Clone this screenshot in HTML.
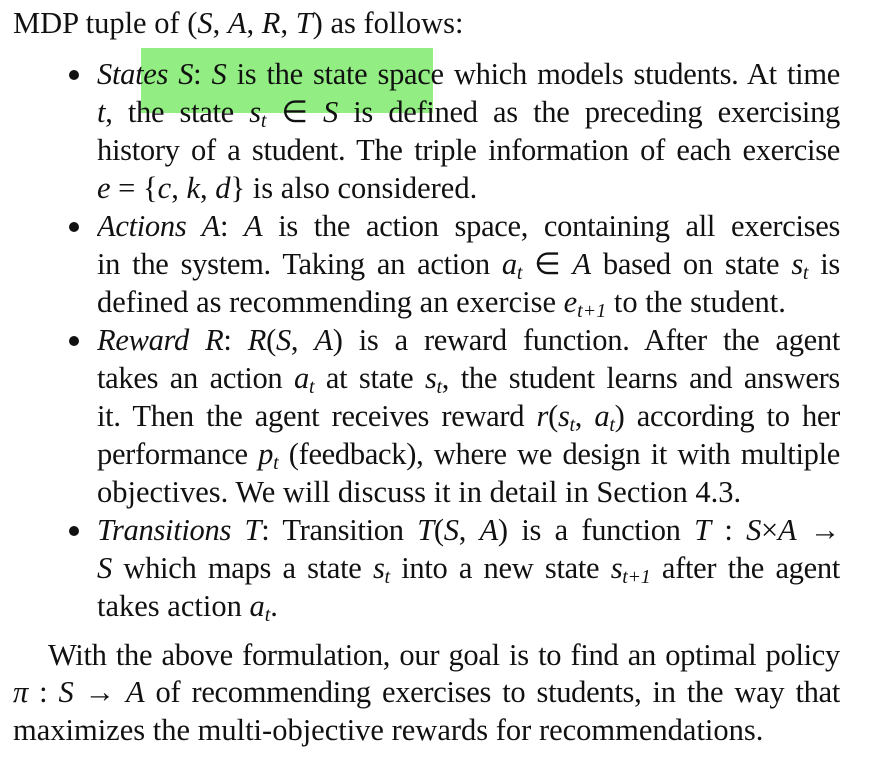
<!DOCTYPE html>
<html><head><meta charset="utf-8"><style>
html,body{margin:0;padding:0;background:#fff;}
body{width:887px;height:766px;position:relative;overflow:hidden;font-family:"Liberation Serif",serif;font-size:30.5px;color:#111;}
.l{position:absolute;line-height:38px;height:38px;white-space:nowrap;}
.j{text-align:justify;text-align-last:justify;white-space:normal;overflow:hidden;letter-spacing:-0.3px;}
.b{left:97px;width:743px;}
.p{left:13px;width:827px;}
i{font-style:italic;}
sub{font-size:20px;font-style:italic;vertical-align:-5px;line-height:0;}
.dot{position:absolute;left:69px;width:10px;height:10px;border-radius:50%;background:#111;}
.hl{position:absolute;left:141px;top:48px;width:292px;height:65px;background:#92ee82;}
</style></head><body>
<div class="hl"></div>
<div class="l" style="left:13px;top:4px">MDP tuple of (<i>S</i>, <i>A</i>, <i>R</i>, <i>T</i>) as follows:</div>

<div class="dot" style="top:70px"></div>
<div class="l j b" style="top:55px"><i>States S</i>: <i>S</i> is the state space which models students. At time</div>
<div class="l j b" style="top:93px"><i>t</i>, the state <i>s</i><sub>t</sub> ∈ <i>S</i> is defined as the preceding exercising</div>
<div class="l j b" style="top:131px">history of a student. The triple information of each exercise</div>
<div class="l b" style="top:169px"><i>e</i> = {<i>c</i>, <i>k</i>, <i>d</i>} is also considered.</div>

<div class="dot" style="top:222px"></div>
<div class="l j b" style="top:207px"><i>Actions A</i>: <i>A</i> is the action space, containing all exercises</div>
<div class="l j b" style="top:245px">in the system. Taking an action <i>a</i><sub>t</sub> ∈ <i>A</i> based on state <i>s</i><sub>t</sub> is</div>
<div class="l b" style="top:283px">defined as recommending an exercise <i>e</i><sub>t+1</sub> to the student.</div>

<div class="dot" style="top:336px"></div>
<div class="l j b" style="top:321px"><i>Reward R</i>: <i>R</i>(<i>S</i>, <i>A</i>) is a reward function. After the agent</div>
<div class="l j b" style="top:359px">takes an action <i>a</i><sub>t</sub> at state <i>s</i><sub>t</sub>, the student learns and answers</div>
<div class="l j b" style="top:397px">it. Then the agent receives reward <i>r</i>(<i>s</i><sub>t</sub>, <i>a</i><sub>t</sub>) according to her</div>
<div class="l j b" style="top:435px">performance <i>p</i><sub>t</sub> (feedback), where we design it with multiple</div>
<div class="l b" style="top:473px">objectives. We will discuss it in detail in Section 4.3.</div>

<div class="dot" style="top:526px"></div>
<div class="l j b" style="top:511px"><i>Transitions T</i>: Transition <i>T</i>(<i>S</i>, <i>A</i>) is a function <i>T</i> : <i>S</i>×<i>A</i> →</div>
<div class="l j b" style="top:549px"><i>S</i> which maps a state <i>s</i><sub>t</sub> into a new state <i>s</i><sub>t+1</sub> after the agent</div>
<div class="l b" style="top:587px">takes action <i>a</i><sub>t</sub>.</div>

<div class="l j" style="left:48px;width:792px;top:636px">With the above formulation, our goal is to find an optimal policy</div>
<div class="l j p" style="top:673px"><i>π</i> : <i>S</i> → <i>A</i> of recommending exercises to students, in the way that</div>
<div class="l" style="left:13px;top:711px">maximizes the multi-objective rewards for recommendations.</div>
</body></html>
